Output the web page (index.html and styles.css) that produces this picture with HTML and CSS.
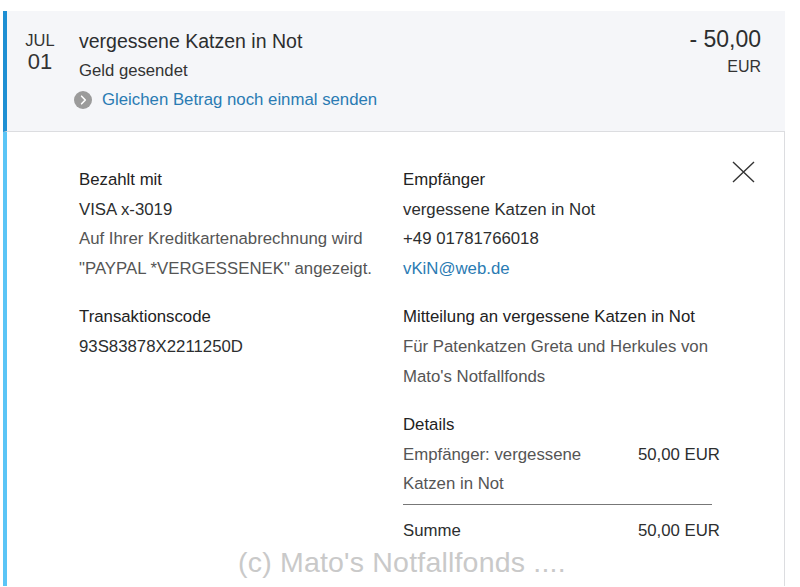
FILE: index.html
```html
<!DOCTYPE html>
<html lang="de">
<head>
  <meta charset="UTF-8" />
  <meta name="viewport" content="width=device-width, initial-scale=1.0" />
  <title>Aktivität | Zahlung</title>
  <link rel="stylesheet" href="styles.css">
</head>
<body>
<main class="page">
  <section class="txn">
    <div class="date">
      <span class="month">JUL</span>
      <span class="day">01</span>
    </div>
    <div class="txn-info">
      <h1 class="txn-name">vergessene Katzen in Not</h1>
      <p class="txn-status">Geld gesendet</p>
      <a class="repeat" href="#">
        <svg class="repeat-icon" width="18" height="18" viewBox="0 0 18 18">
          <circle cx="9" cy="9" r="9" fill="#9b9b9b" />
          <path d="M7.6 5.2 L11.3 9 L7.6 12.8" fill="none" stroke="#fff" stroke-width="1.6" stroke-linecap="round" stroke-linejoin="round" />
        </svg>
        Gleichen Betrag noch einmal senden
      </a>
    </div>
    <div class="txn-amount">
      <span class="value">- 50,00</span>
      <span class="currency">EUR</span>
    </div>
  </section>

  <section class="detail">
    <div class="col">
      <div class="block">
        <p class="label">Bezahlt mit</p>
        <p>VISA x-3019</p>
        <p class="muted">Auf Ihrer Kreditkartenabrechnung wird</p>
        <p class="muted">"PAYPAL *VERGESSENEK" angezeigt.</p>
      </div>
      <div class="block">
        <p class="label">Transaktionscode</p>
        <p>93S83878X2211250D</p>
      </div>
    </div>

    <div class="col">
      <div class="block">
        <p class="label">Empfänger</p>
        <p>vergessene Katzen in Not</p>
        <p>+49 01781766018</p>
        <p><a class="mail" href="#">vKiN@web.de</a></p>
      </div>
      <div class="block">
        <p class="label">Mitteilung an vergessene Katzen in Not</p>
        <p class="muted">Für Patenkatzen Greta und Herkules von</p>
        <p class="muted">Mato's Notfallfonds</p>
      </div>
      <div class="block">
        <p class="label">Details</p>
        <div class="row">
          <span class="row-label muted">Empfänger: vergessene Katzen in Not</span>
          <span class="row-value">50,00 EUR</span>
        </div>
        <div class="rule"></div>
        <div class="row">
          <span class="row-label">Summe</span>
          <span class="row-value">50,00 EUR</span>
        </div>
      </div>
    </div>

    <button class="close" aria-label="Schließen">
      <svg width="23" height="22" viewBox="0 0 23 22">
        <path d="M1 1 L22 21 M22 1 L1 21" stroke="#333" stroke-width="1.4" fill="none" />
      </svg>
    </button>
  </section>

  <p class="watermark">(c) Mato's Notfallfonds ....</p>
</main>
</body>
</html>
```

FILE: styles.css
```css
body {
  margin: 0;
  background: #fff;
  font-family: "Liberation Sans", Arial, sans-serif;
  color: #2c2e2f;
  overflow: hidden;
}

p {
  margin: 0;
}

.page {
  position: relative;
  width: 782px;
  height: 576px;
  margin-left: 3px;
  padding-top: 11px;
}

.txn {
  display: flex;
  height: 121px;
  background: #f5f6f9;
  border-left: 4px solid #1e8fd3;
  border-bottom: 1px solid #dcdde0;
  box-sizing: border-box;
  padding: 19px 24px 0 18px;
}

.date {
  display: flex;
  flex-direction: column;
  align-items: center;
  width: 30px;
  color: #333;
}

.month {
  font-size: 16.5px;
  line-height: 20px;
}

.day {
  font-size: 22px;
  line-height: 24px;
}

.txn-info {
  flex: 1;
  margin-left: 24px;
}

.txn-name {
  margin: 0;
  font-size: 19.5px;
  font-weight: normal;
  line-height: 22px;
  color: #2c2e2f;
}

.txn-status {
  margin-top: 4px;
  font-size: 16.7px;
  line-height: 30px;
  color: #333;
}

.repeat {
  display: flex;
  align-items: center;
  gap: 10px;
  margin-left: -5px;
  font-size: 16.8px;
  line-height: 28px;
  color: #2a7bb3;
  text-decoration: none;
}

.txn-amount {
  display: flex;
  flex-direction: column;
  align-items: flex-end;
}

.value {
  font-size: 23px;
  line-height: 22px;
  margin-top: -2px;
  color: #2c2e2f;
}

.currency {
  font-size: 16px;
  line-height: 20px;
  margin-top: 7px;
  color: #333;
}

.detail {
  position: relative;
  display: flex;
  height: 454px;
  border-left: 4px solid #5bc5f6;
  border-right: 1px solid #dcdde0;
  box-sizing: border-box;
  padding: 33px 0 0 72px;
  font-size: 16.8px;
  line-height: 29.7px;
}

.col {
  width: 324px;
}

.block {
  margin-bottom: 18.5px;
}

.label {
  color: #222;
}

.muted {
  color: #555;
}

.mail {
  color: #2a7bb3;
  text-decoration: none;
}

.row {
  display: flex;
  justify-content: space-between;
  width: 317px;
}

.row-label {
  width: 200px;
}

.rule {
  width: 309px;
  height: 1px;
  background: #777;
  margin: 5px 0 11px;
}

.close {
  position: absolute;
  top: 29px;
  left: 725px;
  padding: 0;
  border: none;
  background: none;
  cursor: pointer;
}

.watermark {
  position: absolute;
  left: 235px;
  top: 546px;
  font-size: 28.5px;
  color: #c9c9c9;
  letter-spacing: 0.2px;
}
```
